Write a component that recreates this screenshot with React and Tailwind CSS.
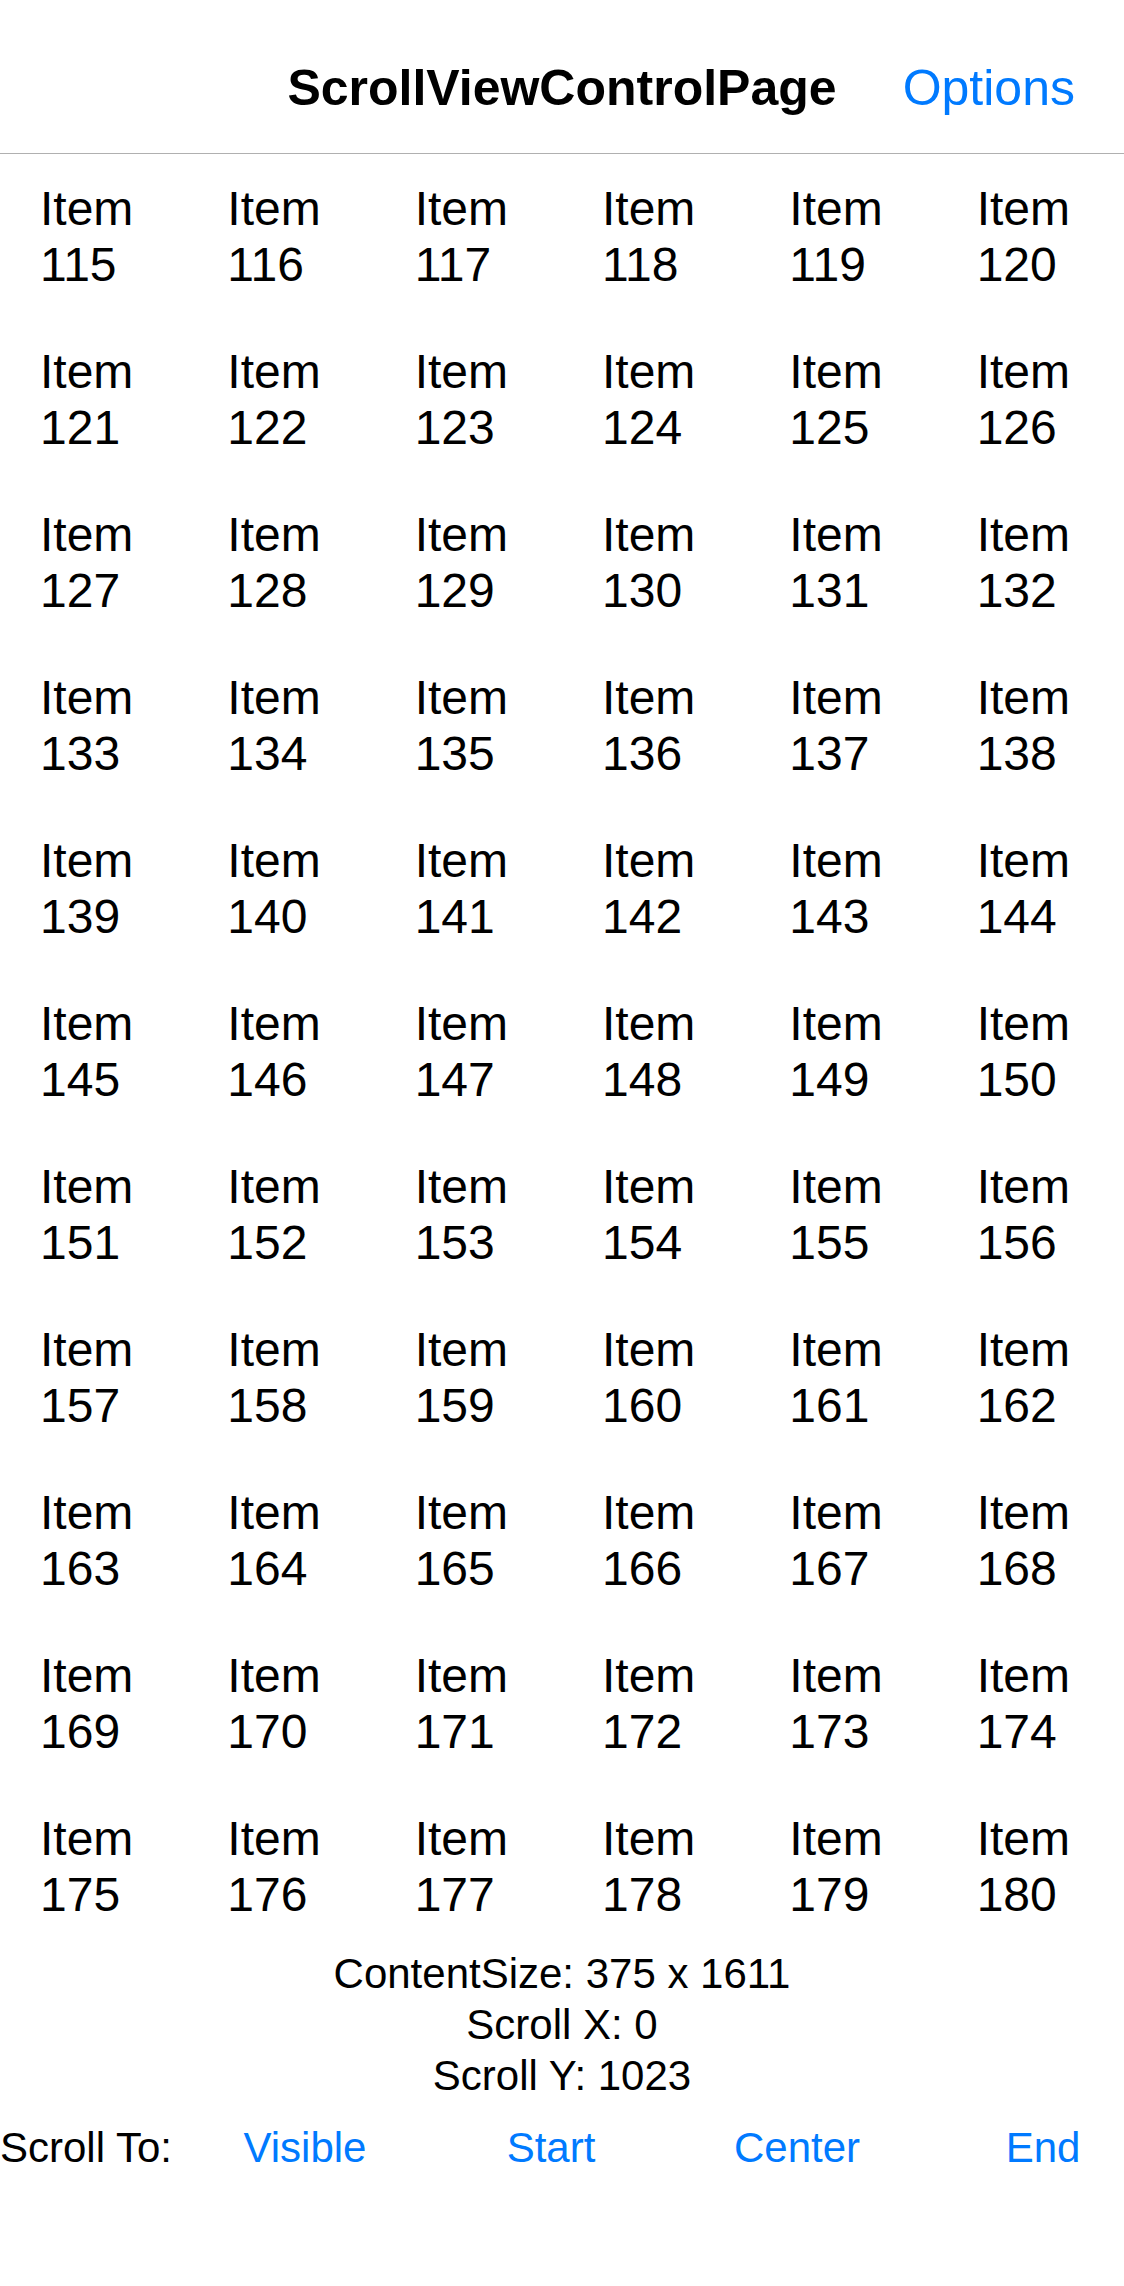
import React from 'react';

const FONT = { fontFamily: '"Liberation Sans", Arial, sans-serif' };

const items = Array.from({ length: 66 }, (_, i) => 115 + i);
const targets = ['Visible', 'Start', 'Center', 'End'];

const App = () => {
  return (
    <div className="w-[1124px] min-h-[2286px] bg-white text-black" style={FONT}>
      {/* nav bar */}
      <div className="h-[154px] border-b border-[#b0b0b0] pt-[60px] grid grid-cols-[1fr_auto_1fr] items-start">
        <div />
        <div className="text-[50px] leading-[56px] font-bold">ScrollViewControlPage</div>
        <div className="justify-self-end pr-[49px] text-[50px] leading-[56px] text-[#007aff]">Options</div>
      </div>

      {/* scroll content */}
      <div className="pt-[27px] grid grid-cols-6 gap-y-[51px]">
        {items.map((n) => (
          <div key={n} className="pl-[40px] text-[48px] leading-[56px]">
            <div>Item</div>
            <div>{n}</div>
          </div>
        ))}
      </div>

      {/* scroll info */}
      <div className="mt-[25px] text-center text-[42px] leading-[51px]">
        <div>ContentSize: 375 x 1611</div>
        <div>Scroll X: 0</div>
        <div>Scroll Y: 1023</div>
      </div>

      {/* scroll to buttons */}
      <div className="mt-[21px] flex overflow-hidden text-[42px] leading-[51px]">
        <div className="w-[182px] shrink-0">Scroll To:</div>
        {targets.map((t) => (
          <button key={t} className="w-[246px] shrink-0 text-center text-[#007aff]">
            {t}
          </button>
        ))}
      </div>
    </div>
  );
};

export default App;
